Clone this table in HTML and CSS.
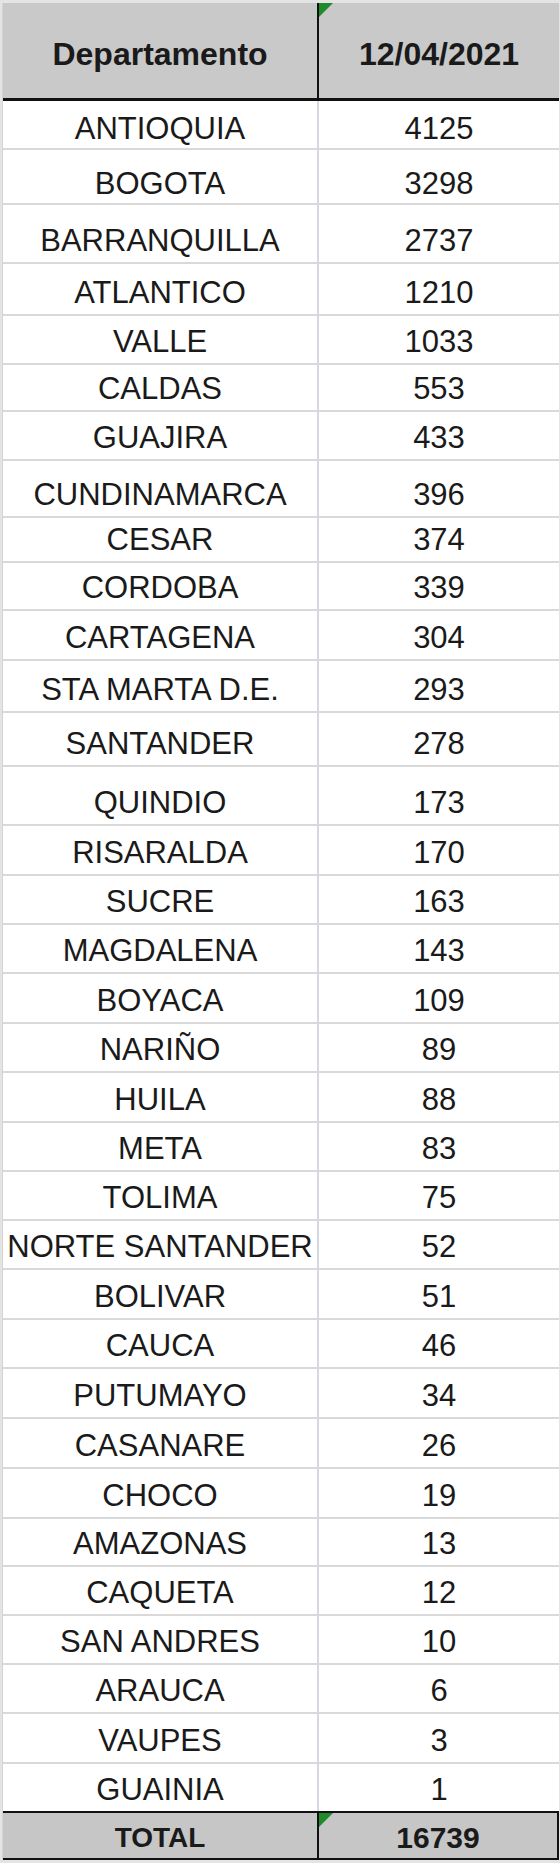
FILE: index.html
```html
<!DOCTYPE html>
<html lang="es">
<head>
<meta charset="utf-8">
<title>Departamento 12/04/2021</title>
<link rel="stylesheet" href="styles.css">
</head>
<body>
<div class="sheet">
  <div class="row head">
    <div class="cell name">Departamento</div>
    <div class="cell val"><span class="flag"></span>12/04/2021</div>
  </div>
  <div class="body">
    <div class="row"><div class="cell name">ANTIOQUIA</div><div class="cell val">4125</div></div>
    <div class="row"><div class="cell name">BOGOTA</div><div class="cell val">3298</div></div>
    <div class="row"><div class="cell name">BARRANQUILLA</div><div class="cell val">2737</div></div>
    <div class="row"><div class="cell name">ATLANTICO</div><div class="cell val">1210</div></div>
    <div class="row"><div class="cell name">VALLE</div><div class="cell val">1033</div></div>
    <div class="row"><div class="cell name">CALDAS</div><div class="cell val">553</div></div>
    <div class="row"><div class="cell name">GUAJIRA</div><div class="cell val">433</div></div>
    <div class="row"><div class="cell name">CUNDINAMARCA</div><div class="cell val">396</div></div>
    <div class="row"><div class="cell name">CESAR</div><div class="cell val">374</div></div>
    <div class="row"><div class="cell name">CORDOBA</div><div class="cell val">339</div></div>
    <div class="row"><div class="cell name">CARTAGENA</div><div class="cell val">304</div></div>
    <div class="row"><div class="cell name">STA MARTA D.E.</div><div class="cell val">293</div></div>
    <div class="row"><div class="cell name">SANTANDER</div><div class="cell val">278</div></div>
    <div class="row"><div class="cell name">QUINDIO</div><div class="cell val">173</div></div>
    <div class="row"><div class="cell name">RISARALDA</div><div class="cell val">170</div></div>
    <div class="row"><div class="cell name">SUCRE</div><div class="cell val">163</div></div>
    <div class="row"><div class="cell name">MAGDALENA</div><div class="cell val">143</div></div>
    <div class="row"><div class="cell name">BOYACA</div><div class="cell val">109</div></div>
    <div class="row"><div class="cell name">NARIÑO</div><div class="cell val">89</div></div>
    <div class="row"><div class="cell name">HUILA</div><div class="cell val">88</div></div>
    <div class="row"><div class="cell name">META</div><div class="cell val">83</div></div>
    <div class="row"><div class="cell name">TOLIMA</div><div class="cell val">75</div></div>
    <div class="row"><div class="cell name">NORTE SANTANDER</div><div class="cell val">52</div></div>
    <div class="row"><div class="cell name">BOLIVAR</div><div class="cell val">51</div></div>
    <div class="row"><div class="cell name">CAUCA</div><div class="cell val">46</div></div>
    <div class="row"><div class="cell name">PUTUMAYO</div><div class="cell val">34</div></div>
    <div class="row"><div class="cell name">CASANARE</div><div class="cell val">26</div></div>
    <div class="row"><div class="cell name">CHOCO</div><div class="cell val">19</div></div>
    <div class="row"><div class="cell name">AMAZONAS</div><div class="cell val">13</div></div>
    <div class="row"><div class="cell name">CAQUETA</div><div class="cell val">12</div></div>
    <div class="row"><div class="cell name">SAN ANDRES</div><div class="cell val">10</div></div>
    <div class="row"><div class="cell name">ARAUCA</div><div class="cell val">6</div></div>
    <div class="row"><div class="cell name">VAUPES</div><div class="cell val">3</div></div>
    <div class="row"><div class="cell name">GUAINIA</div><div class="cell val">1</div></div>
  </div>
  <div class="row total">
    <div class="cell name">TOTAL</div>
    <div class="cell val"><span class="flag"></span>16739</div>
  </div>
</div>
</body>
</html>
```

FILE: styles.css
```css
html, body {
  margin: 0;
  padding: 0;
}
body {
  background: #e4e4e4;
  width: 560px;
  height: 1863px;
  font-family: "Liberation Sans", Arial, sans-serif;
  color: #1a1a1a;
}
.sheet {
  margin: 3px 2px 0 2px;
  width: 556px;
  background: #fff;
  border-left: 1px solid #d4d4d4;
}
.row {
  display: grid;
  grid-template-columns: 316px 1fr;
  box-sizing: border-box;
  height: 49px;
  border-bottom: 2px solid #d9d9d9;
}
.cell {
  display: flex;
  justify-content: center;
  align-items: flex-end;
  padding-bottom: 3px;
  font-size: 31px;
  line-height: 36px;
  white-space: nowrap;
  position: relative;
}
.name {
  border-right: 2px solid #d6d9e2;
}
.body .row:nth-child(-n+2) .cell {
  padding-bottom: 1px;
}
.head {
  height: 98px;
  background: #c9c9c9;
  border-bottom: 3px solid #111;
}
.head .cell {
  align-items: center;
  padding: 6px 0 0 0;
  font-weight: bold;
  font-size: 32px;
}
.head .name,
.total .name {
  border-right: 2px solid #111;
}
.total {
  height: 49px;
  background: #c6c6c6;
  border-top: 2px solid #111;
  border-bottom: 2px solid #111;
  border-right: 2px solid #111;
  margin-top: -2px;
}
.total .cell {
  align-items: center;
  padding: 5px 0 0 0;
  font-weight: bold;
  font-size: 30px;
}
.total .name {
  font-size: 28px;
}
.flag {
  position: absolute;
  left: 0;
  top: 0;
  width: 0;
  height: 0;
  border-top: 14px solid #1f8a2a;
  border-right: 14px solid transparent;
}
.body .row:nth-child(2) { height: 55px; }
.body .row:nth-child(3) { height: 59px; }
.body .row:nth-child(4) { height: 52px; }
.body .row:nth-child(6) { height: 47px; }
.body .row:nth-child(8) { height: 57px; }
.body .row:nth-child(9) { height: 45px; }
.body .row:nth-child(10) { height: 48px; }
.body .row:nth-child(11) { height: 50px; }
.body .row:nth-child(12) { height: 52px; }
.body .row:nth-child(13) { height: 54px; }
.body .row:nth-child(14) { height: 59px; }
.body .row:nth-child(15),
.body .row:nth-child(18),
.body .row:nth-child(20),
.body .row:nth-child(24),
.body .row:nth-child(26),
.body .row:nth-child(27),
.body .row:nth-child(28),
.body .row:nth-child(33) { height: 50px; }
.body .row:nth-child(29) { height: 48px; }
```
